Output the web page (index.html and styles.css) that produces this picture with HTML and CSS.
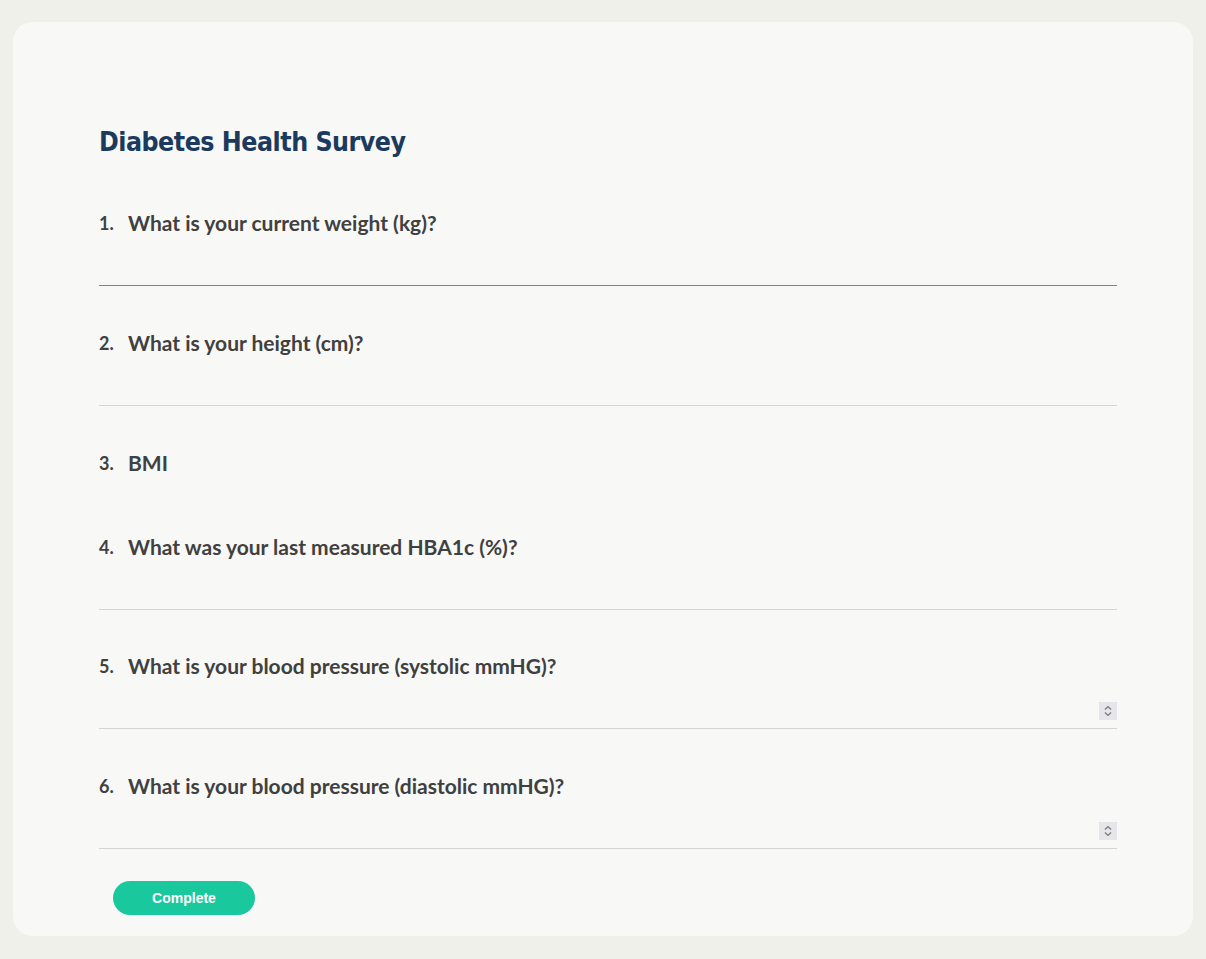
FILE: index.html
```html
<!DOCTYPE html>
<html lang="en">
<head>
    <meta charset="UTF-8">
    <meta name="viewport" content="width=device-width, initial-scale=1.0">
    <title>Diabetes Health Survey</title>
    <link rel="stylesheet" href="styles.css">
</head>
<body>

<div class="encuesta">
    <h1 class="titulo">Diabetes Health Survey</h1>

    <div class="preguntas">
        <div class="pregunta">
            <div class="enunciado"><span class="num">1.</span>What is your current weight (kg)?</div>
            <div class="campo activo"><input type="text"></div>
        </div>

        <div class="pregunta">
            <div class="enunciado"><span class="num">2.</span>What is your height (cm)?</div>
            <div class="campo"><input type="text"></div>
        </div>

        <div class="pregunta solo-texto">
            <div class="enunciado"><span class="num">3.</span>BMI</div>
        </div>

        <div class="pregunta corta">
            <div class="enunciado"><span class="num">4.</span>What was your last measured HBA1c (%)?</div>
            <div class="campo"><input type="text"></div>
        </div>

        <div class="pregunta">
            <div class="enunciado"><span class="num">5.</span>What is your blood pressure (systolic mmHG)?</div>
            <div class="campo">
                <input type="text">
                <span class="flechas">
                    <svg width="10" height="14" viewBox="0 0 10 14"><path d="M2 5.5 L5 2.5 L8 5.5 M2 8.5 L5 11.5 L8 8.5" fill="none" stroke="#777" stroke-width="1.2"/></svg>
                </span>
            </div>
        </div>

        <div class="pregunta">
            <div class="enunciado"><span class="num">6.</span>What is your blood pressure (diastolic mmHG)?</div>
            <div class="campo">
                <input type="text">
                <span class="flechas">
                    <svg width="10" height="14" viewBox="0 0 10 14"><path d="M2 5.5 L5 2.5 L8 5.5 M2 8.5 L5 11.5 L8 8.5" fill="none" stroke="#777" stroke-width="1.2"/></svg>
                </span>
            </div>
        </div>
    </div>

    <button class="boton-completar">Complete</button>
</div>

</body>
</html>
```

FILE: styles.css
```css
/* Fondo general */
body {
    margin: 0;
    background-color: #f0f0eb;
    font-family: Lato, "Open Sans", sans-serif;
}

/* Tarjeta de la encuesta */
.encuesta {
    margin: 22px 13px;
    padding: 100px 76px 21px 86px;
    background-color: #f8f8f6;
    border-radius: 20px;
}

.titulo {
    margin: 0;
    font-family: "DejaVu Sans Condensed", "DejaVu Sans", sans-serif;
    font-weight: bold;
    font-size: 26.5px;
    line-height: 40px;
    letter-spacing: -0.5px;
    color: #1b3a5e;
}

.preguntas {
    margin-top: 49px;
}

.pregunta {
    margin-bottom: 45px;
}

.pregunta.solo-texto {
    margin-bottom: 60px;
}

.pregunta.corta {
    margin-bottom: 44px;
}

.enunciado {
    display: flex;
    font-size: 21px;
    font-weight: bold;
    line-height: 24px;
    color: #404040;
}

.num {
    width: 29px;
    font-size: 18px;
}

/* Campos de respuesta */
.campo {
    display: flex;
    align-items: center;
    margin-top: 11px;
    height: 39px;
    border-bottom: 1px solid #d6d6d6;
}

.campo.activo {
    border-bottom-color: #1ab394;
}

.campo input {
    flex: 1;
    height: 100%;
    border: none;
    background: transparent;
    outline: none;
    font-size: 16px;
}

.flechas {
    display: flex;
    align-items: center;
    justify-content: center;
    width: 18px;
    height: 18px;
    margin-top: 4px;
    background-color: #e6e6ea;
}

/* Botón final */
.boton-completar {
    display: block;
    margin: -13px 0 0 14px;
    width: 142px;
    height: 34px;
    border: none;
    border-radius: 17px;
    background-color: #1ac89e;
    color: #ffffff;
    font-family: "Liberation Sans", Arial, sans-serif;
    font-weight: bold;
    font-size: 14px;
    cursor: pointer;
}
```
